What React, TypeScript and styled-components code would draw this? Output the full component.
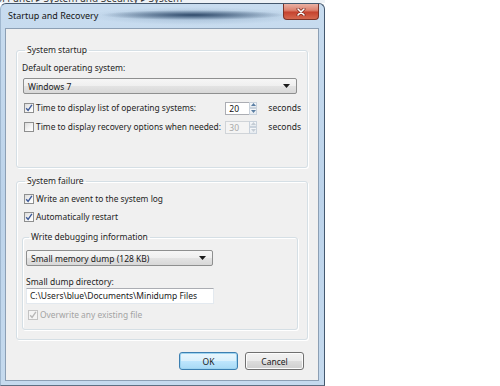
import React from 'react';
import styled, { createGlobalStyle } from 'styled-components';

const GlobalStyle = createGlobalStyle`
  html, body {
    margin: 0;
    padding: 0;
    background: #fff;
  }
  body {
    font-family: "Noto Sans", "Liberation Sans", sans-serif;
  }
`;

const Check = ({ checked, disabled }: { checked?: boolean; disabled?: boolean }) => (
  <CheckBox disabled={disabled}>
    {checked ? (
      <svg width="8" height="8" viewBox="0 0 8 8">
        <path
          d="M1.2 4.2 L3.1 6.4 L6.9 0.9"
          fill="none"
          stroke={disabled ? '#b8b8b8' : '#3d5a98'}
          strokeWidth="1.4"
        />
      </svg>
    ) : null}
  </CheckBox>
);

const ComboArrow = () => (
  <svg width="7" height="4" viewBox="0 0 7 4">
    <polygon points="0,0 7,0 3.5,4" fill="#1a1a1a" />
  </svg>
);

const Spinner = ({ value, disabled }: { value: string; disabled?: boolean }) => (
  <Spin>
    <SpinField disabled={disabled}>{value}</SpinField>
    <SpinButtons>
      <SpinHalf>
        <svg width="5" height="3" viewBox="0 0 5 3">
          <polygon points="0,3 5,3 2.5,0" fill={disabled ? '#c4ccd4' : '#5b7ea3'} />
        </svg>
      </SpinHalf>
      <SpinHalf>
        <svg width="5" height="3" viewBox="0 0 5 3">
          <polygon points="0,0 5,0 2.5,3" fill={disabled ? '#c4ccd4' : '#5b7ea3'} />
        </svg>
      </SpinHalf>
    </SpinButtons>
  </Spin>
);

const App = () => (
  <Root>
    <GlobalStyle />
    <Column>
      <Backdrop>
        <Crumbs>Control Panel ▸ System and Security ▸ System</Crumbs>
      </Backdrop>
      <Window>
        <TitleBar>
          <Title>Startup and Recovery</Title>
          <CloseButton>
            <svg width="10" height="8" viewBox="0 0 10 8">
              <path d="M2 1 L8 7 M8 1 L2 7" stroke="#7a2a20" strokeWidth="3" strokeLinecap="round" />
              <path d="M2 1 L8 7 M8 1 L2 7" stroke="#fff" strokeWidth="1.6" strokeLinecap="round" />
            </svg>
          </CloseButton>
        </TitleBar>
        <Client>
          <Group padRight={6} padBottom={33}>
            <Legend>System startup</Legend>
            <Text top={6}>Default operating system:</Text>
            <Combo top={4} left={1} width={274}>
              <span>Windows 7</span>
              <ComboArrow />
            </Combo>
            <Row top={7}>
              <Check checked />
              <RowLabel>Time to display list of operating systems:</RowLabel>
              <Spinner value="20" />
              <Seconds>seconds</Seconds>
            </Row>
            <Row top={5}>
              <Check />
              <RowLabel>Time to display recovery options when needed:</RowLabel>
              <Spinner value="30" disabled />
              <Seconds>seconds</Seconds>
            </Row>
          </Group>
          <Group padRight={9} padBottom={9} top={7}>
            <Legend>System failure</Legend>
            <Row top={5}>
              <Check checked />
              <RowLabel>Write an event to the system log</RowLabel>
            </Row>
            <Row top={4}>
              <Check checked />
              <RowLabel>Automatically restart</RowLabel>
            </Row>
            <Group padLeft={3} padRight={3} padBottom={7} top={7}>
              <Legend>Write debugging information</Legend>
              <Combo top={7} width={187}>
                <span>Small memory dump (128 KB)</span>
                <ComboArrow />
              </Combo>
              <Text top={10}>Small dump directory:</Text>
              <PathInput>C:\Users\blue\Documents\Minidump Files</PathInput>
              <Row top={4}>
                <Check checked disabled />
                <RowLabel disabled>Overwrite any existing file</RowLabel>
              </Row>
            </Group>
          </Group>
          <Buttons>
            <Button primary>OK</Button>
            <Button>Cancel</Button>
          </Buttons>
        </Client>
      </Window>
    </Column>
  </Root>
);

const Root = styled.div`
  display: flex;
  width: 500px;
  height: 386px;
  overflow: hidden;
  background: #fff;
`;

const Column = styled.div`
  width: 325px;
  display: flex;
  flex-direction: column;
`;

const Backdrop = styled.div`
  height: 3px;
  overflow: hidden;
  background: #eef2f6;
`;

const Crumbs = styled.div`
  margin: -7px 0 0 -30px;
  font-size: 10px;
  line-height: 10px;
  color: #3a3a3a;
  white-space: nowrap;
`;

const Window = styled.div`
  flex: 1;
  display: flex;
  flex-direction: column;
  border: 1px solid #44586e;
  border-left-color: #9fb7cf;
  border-bottom-color: #5d6f82;
  border-radius: 6px 6px 0 0;
  background: linear-gradient(180deg, #c8dcef 0%, #bcd3ea 50%, #c5daee 100%);
`;

const TitleBar = styled.div`
  height: 24px;
  display: flex;
  align-items: flex-start;
  padding-left: 7px;
  background:
    radial-gradient(ellipse 92px 5px at 192px 11px, rgba(35, 62, 95, 0.9), rgba(35, 62, 95, 0) 100%),
    radial-gradient(ellipse 110px 9px at 195px 12px, rgba(90, 125, 160, 0.35), rgba(90, 125, 160, 0) 100%);
`;

const Title = styled.div`
  margin-top: 5px;
  font-size: 9px;
  line-height: 13px;
  color: #151515;
`;

const CloseButton = styled.div`
  margin-left: auto;
  margin-right: 5px;
  width: 36px;
  height: 16px;
  box-sizing: border-box;
  border: 1px solid #7b3328;
  border-top: none;
  border-radius: 0 0 4px 4px;
  background: linear-gradient(180deg, #eab1a4 0%, #dc806d 42%, #c5432f 55%, #d5684f 100%);
  display: flex;
  align-items: center;
  justify-content: center;
`;

const Client = styled.div`
  flex: 1;
  display: flex;
  flex-direction: column;
  margin: 0 5px 4px 4px;
  padding: 15px 10px 0 10px;
  background: #f0f0f0;
  border: 1px solid #8c9fb4;
`;

const Group = styled.fieldset<{ padLeft?: number; padRight?: number; padBottom?: number; top?: number }>`
  margin: ${(p) => p.top || 0}px 0 0 0;
  padding: 0 ${(p) => p.padRight || 0}px ${(p) => p.padBottom || 0}px ${(p) => (p.padLeft === undefined ? 5 : p.padLeft)}px;
  border: 1px solid #d5dfe5;
  border-radius: 3px;
  box-shadow: inset 1px 1px 0 #fff, 1px 1px 0 #fff;
  display: flex;
  flex-direction: column;
  min-width: 0;
`;

const Legend = styled.legend`
  padding: 0 2px;
  margin-left: 3px;
  font-size: 8.5px;
  line-height: 12px;
  color: #1e1e1e;
`;

const Text = styled.div<{ top?: number }>`
  margin-top: ${(p) => p.top || 0}px;
  font-size: 8.5px;
  line-height: 12px;
  color: #1e1e1e;
`;

const Combo = styled.div<{ top?: number; left?: number; width: number }>`
  margin: ${(p) => p.top || 0}px 0 0 ${(p) => p.left || 0}px;
  width: ${(p) => p.width}px;
  height: 16px;
  box-sizing: border-box;
  padding: 0 6px 0 4px;
  border: 1px solid #8e8f8f;
  border-radius: 2px;
  background: linear-gradient(180deg, #f6f6f6 0%, #efefef 50%, #e3e3e3 51%, #d8d8d8 100%);
  display: flex;
  align-items: center;
  justify-content: space-between;
  font-size: 8.5px;
  color: #1a1a1a;
`;

const Row = styled.div<{ top?: number }>`
  margin-top: ${(p) => p.top || 0}px;
  height: 14px;
  display: flex;
  align-items: center;
`;

const CheckBox = styled.span<{ disabled?: boolean }>`
  margin: 0 2px 0 2px;
  width: 10px;
  height: 10px;
  box-sizing: border-box;
  border: 1px solid ${(p) => (p.disabled ? '#c3c3c3' : '#8e8f8f')};
  background: ${(p) =>
    p.disabled ? '#f4f4f4' : 'linear-gradient(135deg, #dcdcdc 0%, #f6f6f6 60%, #ffffff 100%)'};
  display: flex;
  align-items: center;
  justify-content: center;
  flex-shrink: 0;
`;

const RowLabel = styled.span<{ disabled?: boolean }>`
  flex: 1;
  font-size: 8.4px;
  line-height: 12px;
  color: ${(p) => (p.disabled ? '#a3a3a3' : '#1e1e1e')};
  white-space: nowrap;
`;

const Spin = styled.div`
  display: flex;
  width: 32px;
  height: 13px;
`;

const SpinField = styled.div<{ disabled?: boolean }>`
  flex: 1;
  box-sizing: border-box;
  border: 1px solid ${(p) => (p.disabled ? '#d0d4d8' : '#abadb3')};
  border-right: none;
  background: ${(p) => (p.disabled ? '#f4f4f4' : '#fff')};
  padding-left: 3px;
  font-size: 8.5px;
  line-height: 11px;
  color: ${(p) => (p.disabled ? '#a8a8a8' : '#111')};
`;

const SpinButtons = styled.div`
  width: 8px;
  display: flex;
  flex-direction: column;
`;

const SpinHalf = styled.div`
  flex: 1;
  box-sizing: border-box;
  border: 1px solid #c9d2dc;
  background: linear-gradient(180deg, #f6f8fa, #e6ebf0);
  display: flex;
  align-items: center;
  justify-content: center;
`;

const Seconds = styled.span`
  margin-left: 11px;
  font-size: 8.5px;
  line-height: 12px;
  color: #1e1e1e;
`;

const PathInput = styled.div`
  width: 188px;
  height: 16px;
  box-sizing: border-box;
  border: 1px solid #e3e9ef;
  border-top-color: #abadb3;
  background: #fff;
  padding-left: 3px;
  font-size: 8.5px;
  line-height: 14px;
  color: #1a1a1a;
  white-space: nowrap;
`;

const Buttons = styled.div`
  margin: 12px 4px 0 0;
  display: flex;
  justify-content: flex-end;
  gap: 7px;
`;

const Button = styled.div<{ primary?: boolean }>`
  width: 59px;
  height: 18px;
  box-sizing: border-box;
  border: 1px solid ${(p) => (p.primary ? '#3c7fb1' : '#707070')};
  border-radius: 3px;
  background: ${(p) =>
    p.primary
      ? 'linear-gradient(180deg, #eaf6fd 0%, #d9f0fc 50%, #bee6fd 51%, #a7d9f5 100%)'
      : 'linear-gradient(180deg, #f2f2f2 0%, #ebebeb 50%, #dddddd 51%, #cfcfcf 100%)'};
  box-shadow: ${(p) => (p.primary ? 'inset 0 0 0 1px #9ed4f0' : 'inset 0 0 0 1px #fcfcfc')};
  display: flex;
  align-items: center;
  justify-content: center;
  font-size: 8.5px;
  color: #1a1a1a;
`;

export default App;
